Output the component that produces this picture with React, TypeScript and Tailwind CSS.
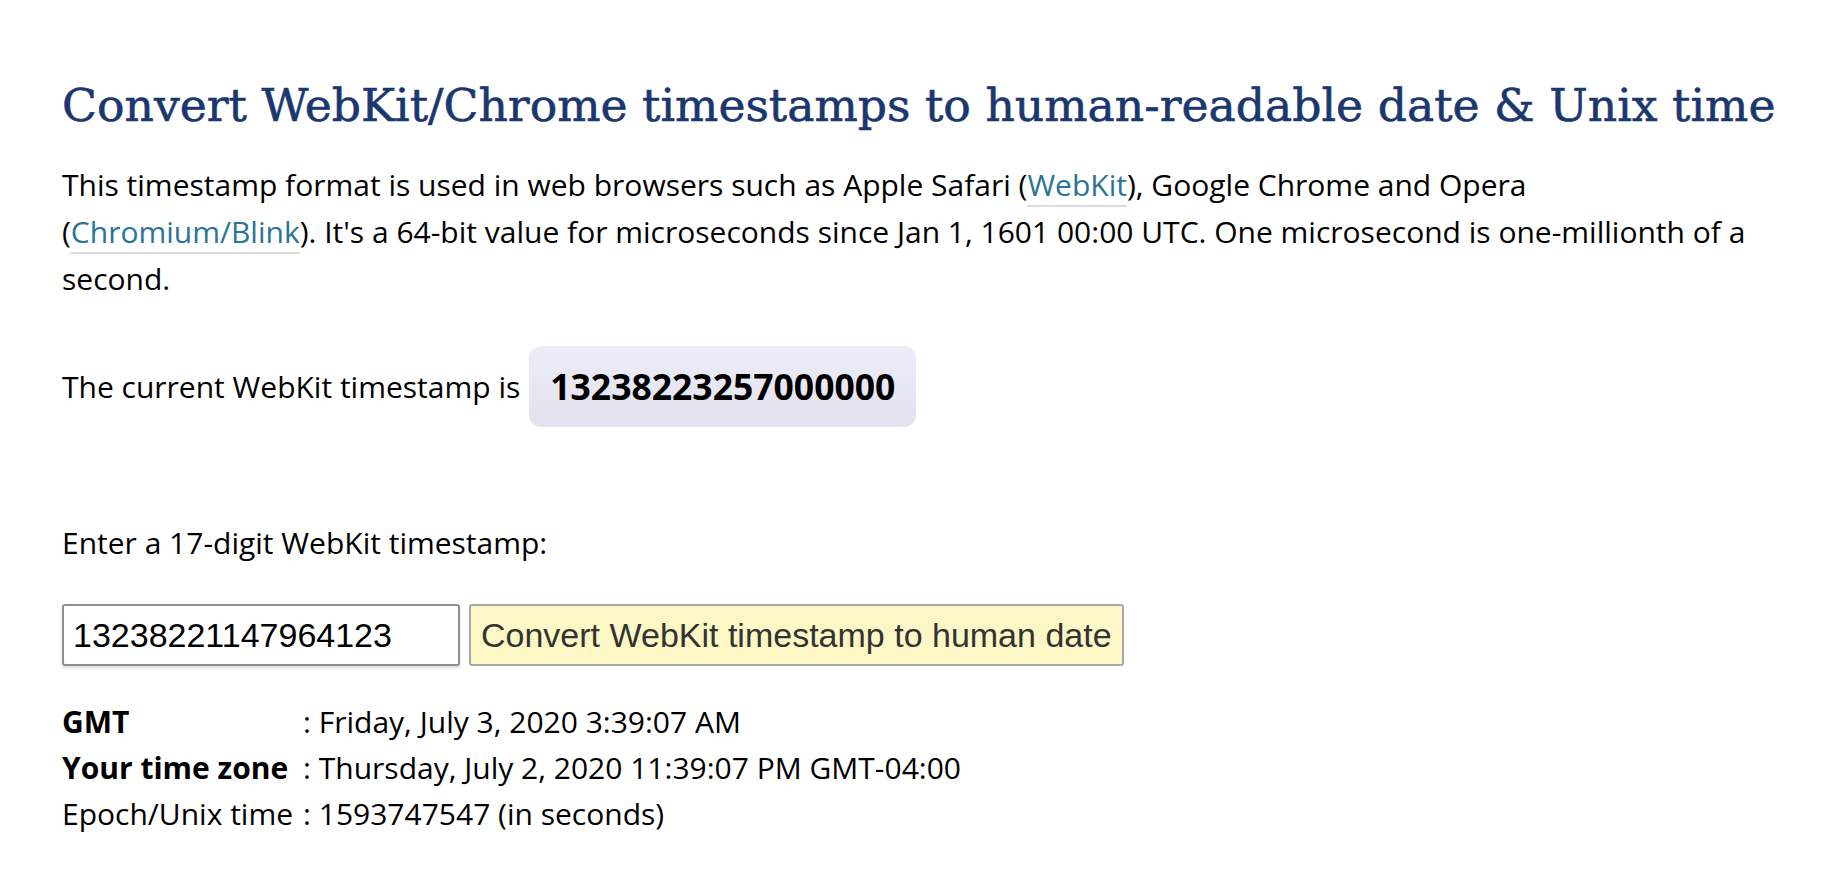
import React from "react";

export default function App() {
  return (
    <div className="min-h-[880px] bg-white pl-[62px] pr-[40px] pt-[78px] text-black" style={{ fontFamily: '"Open Sans", "Noto Sans", sans-serif' }}>
      <h1 className="text-[45.7px] leading-[56px] text-[#1b3770] [-webkit-text-stroke:0.6px_#1b3770]" style={{ fontFamily: '"DejaVu Serif", serif' }}>
        Convert WebKit/Chrome timestamps to human-readable date &amp; Unix time
      </h1>
      <p className="mt-[27px] text-[30px] leading-[47px]">
        This timestamp format is used in web browsers such as Apple Safari (
        <a className="text-[#2a7497] border-b-2 border-[#dcdcdc]">WebKit</a>), Google Chrome and Opera
        <br />(
        <a className="text-[#2a7497] border-b-2 border-[#dcdcdc]">Chromium/Blink</a>). It's a 64-bit value for microseconds since Jan 1, 1601 00:00 UTC. One microsecond is one-millionth of a
        <br />second.
      </p>
      <div className="mt-[44px] flex items-center">
        <span className="text-[30px] leading-[47px]">The current WebKit timestamp is</span>
        <span className="ml-[9px] rounded-[12px] bg-gradient-to-b from-[#ededf9] to-[#e2e2ef] px-[21px] py-[14px] text-[35.5px] font-bold leading-[53px]">
          13238223257000000
        </span>
      </div>
      <p className="mt-[92px] text-[30px] leading-[47px]">Enter a 17-digit WebKit timestamp:</p>
      <div className="mt-[38px] flex items-center gap-[9px]">
        <input
          readOnly
          value="13238221147964123"
          className="h-[62px] w-[398px] rounded-[3px] border-2 border-[#8f8f8f] bg-white px-[9px] text-[34px] text-black shadow-[0_2px_3px_rgba(0,0,0,0.15)]"
          style={{ fontFamily: '"Liberation Sans", Arial, sans-serif' }}
        />
        <button
          className="h-[62px] rounded-[3px] border-2 border-[#a8a8a8] bg-[#fdf7c6] px-[10px] text-[34px] text-[#333]"
          style={{ fontFamily: '"Liberation Sans", Arial, sans-serif' }}
        >
          Convert WebKit timestamp to human date
        </button>
      </div>
      <div className="mt-[33px] grid grid-cols-[auto_1fr] gap-x-[10px] text-[30px] leading-[46px]">
        <span className="font-bold">GMT</span>
        <span>: Friday, July 3, 2020 3:39:07 AM</span>
        <span className="font-bold">Your time zone</span>
        <span>: Thursday, July 2, 2020 11:39:07 PM GMT-04:00</span>
        <span>Epoch/Unix time</span>
        <span>: 1593747547 (in seconds)</span>
      </div>
    </div>
  );
}
